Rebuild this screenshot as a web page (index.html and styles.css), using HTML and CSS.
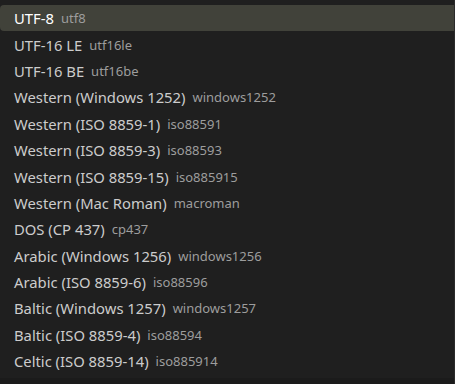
FILE: index.html
```html
<!DOCTYPE html>
<html lang="en">
<head>
    <meta charset="UTF-8">
    <title>Select File Encoding</title>
    <link rel="stylesheet" href="styles.css">
</head>
<body>
    <div class="picker">
        <ul class="list">
            <li class="row selected"><span class="label">UTF-8</span><span class="desc">utf8</span></li>
            <li class="row"><span class="label">UTF-16 LE</span><span class="desc">utf16le</span></li>
            <li class="row"><span class="label">UTF-16 BE</span><span class="desc">utf16be</span></li>
            <li class="row"><span class="label">Western (Windows 1252)</span><span class="desc">windows1252</span></li>
            <li class="row"><span class="label">Western (ISO 8859-1)</span><span class="desc">iso88591</span></li>
            <li class="row"><span class="label">Western (ISO 8859-3)</span><span class="desc">iso88593</span></li>
            <li class="row"><span class="label">Western (ISO 8859-15)</span><span class="desc">iso885915</span></li>
            <li class="row"><span class="label">Western (Mac Roman)</span><span class="desc">macroman</span></li>
            <li class="row"><span class="label">DOS (CP 437)</span><span class="desc">cp437</span></li>
            <li class="row"><span class="label">Arabic (Windows 1256)</span><span class="desc">windows1256</span></li>
            <li class="row"><span class="label">Arabic (ISO 8859-6)</span><span class="desc">iso88596</span></li>
            <li class="row"><span class="label">Baltic (Windows 1257)</span><span class="desc">windows1257</span></li>
            <li class="row"><span class="label">Baltic (ISO 8859-4)</span><span class="desc">iso88594</span></li>
            <li class="row"><span class="label">Celtic (ISO 8859-14)</span><span class="desc">iso885914</span></li>
        </ul>
        <div class="footer"></div>
    </div>
</body>
</html>
```

FILE: styles.css
```css
body {
    margin: 0;
    background-color: #1f1f1f;
    font-family: 'Noto Sans', 'Open Sans', sans-serif;
}
.picker {
    width: 455px;
    height: 384px;
    display: flex;
    flex-direction: column;
    background-color: #1f1f1f;
    border-right: 1px solid #2b2b2b;
    box-sizing: border-box;
    overflow: hidden;
}
.list {
    list-style: none;
    margin: 0;
    padding: 5px 0 0 0;
    flex: 1;
}
.row {
    height: 26.4px;
    display: flex;
    align-items: center;
    padding-left: 14px;
    border-radius: 4px 0 0 4px;
    color: #cccccc;
    font-size: 14.8px;
    white-space: nowrap;
}
.row.selected {
    background-color: #41423a;
    color: #ffffff;
}
.desc {
    margin-left: 7px;
    font-size: 13px;
    color: #9d9d9d;
}
.footer {
    height: 6px;
    background-color: #1b1b1b;
}
```
